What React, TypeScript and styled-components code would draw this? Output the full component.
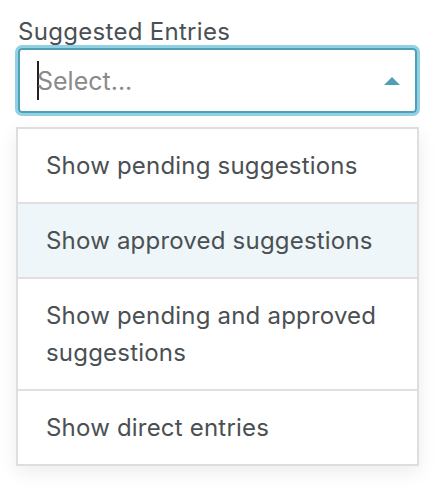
import styled, { createGlobalStyle } from "styled-components";

const options = [
  { label: "Show pending suggestions" },
  { label: "Show approved suggestions", active: true },
  { label: "Show pending and approved suggestions" },
  { label: "Show direct entries" },
];

const App = () => {
  return (
    <>
      <GlobalStyle />
      <Wrapper>
        <Label>Suggested Entries</Label>
        <SelectBox>
          <Caret />
          <Placeholder>Select...</Placeholder>
          <Arrow viewBox="0 0 16 8">
            <path d="M0 8 L8 0 L16 8 Z" fill="#4f9fb7" />
          </Arrow>
        </SelectBox>
        <Menu>
          {options.map((opt, i) => (
            <Option key={i} $active={!!opt.active}>
              {opt.label}
            </Option>
          ))}
        </Menu>
      </Wrapper>
    </>
  );
};

export default App;

const GlobalStyle = createGlobalStyle`
  body {
    margin: 0;
    background: #ffffff;
    font-family: Inter, "Noto Sans", sans-serif;
  }
`;

const Wrapper = styled.div`
  width: 442px;
  height: 496px;
  padding: 17px 0 0 16px;
  box-sizing: border-box;
  display: flex;
  flex-direction: column;
`;

const Label = styled.div`
  color: #4a5053;
  font-size: 24px;
  line-height: 30px;
  margin-left: 2px;
  margin-bottom: 1px;
  letter-spacing: 0.3px;
`;

const SelectBox = styled.div`
  width: 399px;
  height: 65px;
  margin-left: 2px;
  box-sizing: border-box;
  border: 2px solid #4f9fb7;
  border-radius: 4px;
  box-shadow: 0 0 0 3px #90d1e4;
  display: flex;
  align-items: center;
  padding: 0 15px 0 17px;
`;

const Caret = styled.span`
  width: 2px;
  height: 39px;
  background: #222;
  margin-right: -2px;
`;

const Placeholder = styled.span`
  flex: 1;
  color: #8a8a8a;
  font-size: 25px;
`;

const Arrow = styled.svg`
  width: 16px;
  height: 8px;
`;

const Menu = styled.div`
  margin-top: 14px;
  width: 403px;
  box-sizing: border-box;
  border: 2px solid #dedede;
  background: #fff;
  box-shadow: 0 6px 18px rgba(0, 0, 0, 0.08);
`;

const Option = styled.div<{ $active: boolean }>`
  padding: 18px 28px;
  font-size: 24px;
  line-height: 37px;
  letter-spacing: 0.2px;
  color: #4a5053;
  background: ${(p) => (p.$active ? "#eef6f9" : "#ffffff")};
  & + & {
    border-top: 2px solid #e0e0e0;
  }
`;
